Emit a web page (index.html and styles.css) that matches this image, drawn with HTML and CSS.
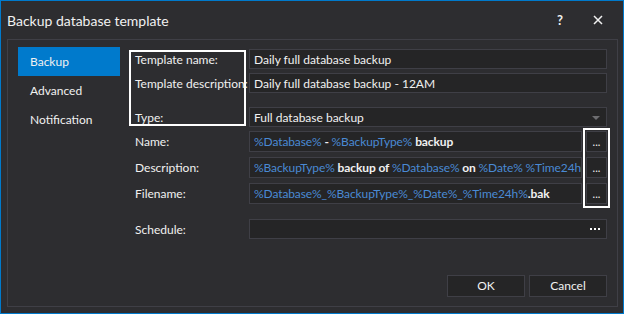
FILE: index.html
```html
<!DOCTYPE html>
<html>

<head>
    <title>Backup database template</title>

    <link rel="stylesheet" href="styles.css">
</head>

<body>
    <div class="window">
        <div class="titleBar">
            <span class="titleText">Backup database template</span>
            <span class="titleBtn help">?</span>
            <span class="titleBtn close">
                <svg width="10" height="10" viewBox="0 0 10 10">
                    <path d="M1 1 L9 9 M9 1 L1 9" stroke="#f1f1f1" stroke-width="1.5" fill="none" />
                </svg>
            </span>
        </div>
        <div class="panel">
            <div class="sideMenu">
                <div class="menuItem selected">Backup</div>
                <div class="menuItem">Advanced</div>
                <div class="menuItem">Notification</div>
            </div>
            <div class="form">
                <div class="row small">
                    <div class="label">Template name:</div>
                    <div class="field">Daily full database backup</div>
                </div>
                <div class="row small">
                    <div class="label">Template description:</div>
                    <div class="field">Daily full database backup - 12AM</div>
                </div>
                <div class="row small typeRow">
                    <div class="label">Type:</div>
                    <div class="field combo">Full database backup<span class="arrow"></span></div>
                </div>
                <div class="row big">
                    <div class="label">Name:</div>
                    <div class="field tokens"><span class="tok">%Database%</span> - <span class="tok">%BackupType%</span> backup</div>
                    <div class="dots">...</div>
                </div>
                <div class="row big">
                    <div class="label">Description:</div>
                    <div class="field tokens"><span class="tok">%BackupType%</span> backup of <span class="tok">%Database%</span> on <span class="tok">%Date%</span> <span class="tok">%Time24h%</span></div>
                    <div class="dots">...</div>
                </div>
                <div class="row big">
                    <div class="label">Filename:</div>
                    <div class="field tokens"><span class="tok">%Database%_%BackupType%_%Date%_%Time24h%</span>.bak</div>
                    <div class="dots">...</div>
                </div>
                <div class="row small scheduleRow">
                    <div class="label">Schedule:</div>
                    <div class="field schedule">
                        <svg width="10" height="2" viewBox="0 0 10 2">
                            <rect x="0" y="0" width="2" height="2" fill="#ffffff" />
                            <rect x="4" y="0" width="2" height="2" fill="#ffffff" />
                            <rect x="8" y="0" width="2" height="2" fill="#ffffff" />
                        </svg>
                    </div>
                </div>
                <div class="buttons">
                    <div class="btn">OK</div>
                    <div class="btn">Cancel</div>
                </div>

                <!-- highlight marks -->
                <div class="mark markLabels"></div>
                <div class="mark markDots"></div>
            </div>
        </div>
    </div>
</body>

</html>
```

FILE: styles.css
```css
body {
    margin: 0;
    background: #2d2d30;
    font-family: Lato, "Open Sans", sans-serif;
    color: #f1f1f1;
}

.window {
    width: 624px;
    height: 314px;
    box-sizing: border-box;
    border: 1px solid #007acc;
    background: #2d2d30;
    display: flex;
    flex-direction: column;
}

.titleBar {
    height: 38px;
    display: flex;
    align-items: center;
    padding-left: 6px;
}

.titleText {
    font-size: 14px;
    flex: 1;
}

.titleBtn {
    width: 32px;
    text-align: center;
    font-size: 13px;
    font-weight: bold;
}

.help {
    margin-right: 6px;
}

.close {
    margin-right: 9px;
    display: flex;
    justify-content: center;
}

.panel {
    flex: 1;
    margin: 0 5px 6px 6px;
    border: 1px solid #3f3f46;
    display: flex;
}

.sideMenu {
    flex-shrink: 0;
    padding: 7px 0 0 10px;
    width: 102px;
}

.menuItem {
    height: 29px;
    line-height: 29px;
    padding-left: 12px;
    font-size: 12px;
}

.menuItem.selected {
    background: #007acc;
}

.form {
    flex: 1;
    min-width: 0;
    position: relative;
    display: flex;
    flex-direction: column;
    padding: 9px 10px 0 15px;
    font-size: 12px;
}

.row {
    display: flex;
    align-items: center;
    flex-shrink: 0;
}

.row.small {
    height: 20px;
    margin-bottom: 4px;
}

.row.big {
    height: 21px;
    margin-bottom: 5px;
}

.typeRow {
    margin-top: 10px;
}

.scheduleRow {
    margin-top: 10px;
}

.label {
    width: 114px;
    flex-shrink: 0;
    white-space: nowrap;
}

.field {
    flex: 1;
    min-width: 0;
    height: 100%;
    box-sizing: border-box;
    border: 1px solid #3f3f46;
    background: #252526;
    padding-left: 4px;
    display: flex;
    align-items: center;
    white-space: nowrap;
    overflow: hidden;
}

.combo {
    position: relative;
}

.arrow {
    position: absolute;
    right: 6px;
    top: 8px;
    border-left: 4px solid transparent;
    border-right: 4px solid transparent;
    border-top: 4px solid #6d6d70;
}

.tokens {
    font-weight: bold;
    display: block;
    line-height: 19px;
    letter-spacing: -0.1px;
}

.tok {
    color: #4a8ad4;
    font-weight: normal;
}

.dots {
    width: 21px;
    height: 100%;
    flex-shrink: 0;
    box-sizing: border-box;
    margin-left: 4px;
    border: 1px solid #3f3f46;
    background: #252526;
    font-size: 11px;
    text-align: center;
    line-height: 20px;
}

.schedule {
    justify-content: flex-end;
    padding-right: 6px;
}

.buttons {
    display: flex;
    justify-content: flex-end;
    gap: 4px;
    margin-top: 32px;
}

.btn {
    width: 78px;
    height: 22px;
    box-sizing: border-box;
    border: 1px solid #3f3f46;
    background: #252526;
    text-align: center;
    line-height: 20px;
    font-size: 12px;
}

.mark {
    position: absolute;
    border: 2px solid #ffffff;
    box-sizing: border-box;
}

.markLabels {
    left: 9px;
    top: 10px;
    width: 117px;
    height: 76px;
}

.markDots {
    left: 463px;
    top: 88px;
    width: 27px;
    height: 80px;
}
```
